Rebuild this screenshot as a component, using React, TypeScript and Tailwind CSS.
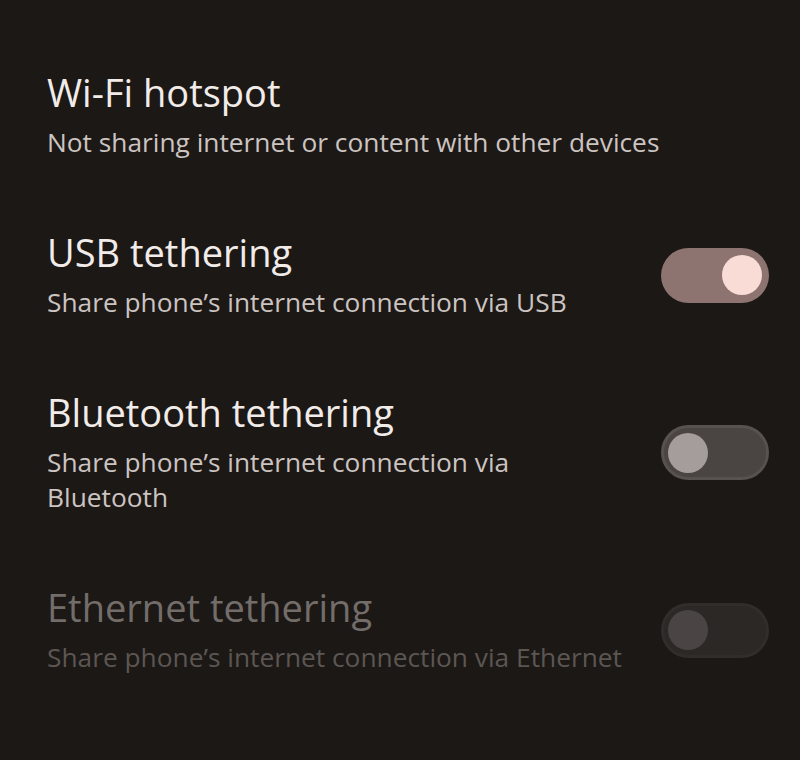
import type { ReactNode } from "react";

// Tethering settings list: title + summary on the left, a Material 3 switch on the right.

type SwitchState = "on" | "off" | "disabled";

type Row = {
  title: string;
  summary: string;
  toggle?: SwitchState;
  disabled?: boolean;
};

const rows: Row[] = [
  { title: "Wi-Fi hotspot", summary: "Not sharing internet or content with other devices" },
  { title: "USB tethering", summary: "Share phone’s internet connection via USB", toggle: "on" },
  {
    title: "Bluetooth tethering",
    summary: "Share phone’s internet connection via Bluetooth",
    toggle: "off",
  },
  {
    title: "Ethernet tethering",
    summary: "Share phone’s internet connection via Ethernet",
    toggle: "disabled",
    disabled: true,
  },
];

function Switch({ state }: { state: SwitchState }): ReactNode {
  if (state === "on") {
    return (
      <div className="flex h-[55px] w-[108px] shrink-0 items-center justify-end rounded-full bg-[#8e7471] pr-[7px]">
        <div className="h-[40px] w-[40px] rounded-full bg-[#fadcd7]" />
      </div>
    );
  }
  const off = state === "off";
  return (
    <div
      className={[
        "flex h-[55px] w-[108px] shrink-0 items-center rounded-full border-[3px] pl-[4px]",
        off ? "border-[#57514f] bg-[#4a4442]" : "border-[#322d2b] bg-[#2c2826]",
      ].join(" ")}
    >
      <div
        className={[
          "h-[40px] w-[40px] rounded-full",
          off ? "bg-[#a59d9b]" : "bg-[#4a4544]",
        ].join(" ")}
      />
    </div>
  );
}

export default function App(): ReactNode {
  return (
    <div
      className="min-h-[760px] w-[800px] bg-[#1c1816] pt-[35px]"
      style={{ fontFamily: "'Open Sans', 'Noto Sans', sans-serif" }}
    >
      {rows.map((row) => (
        <div key={row.title} className="flex items-center justify-between gap-6 py-[35px] pl-[47px] pr-[31px]">
          <div className="min-w-0 flex-1">
            <div
              className={[
                "text-[38px] leading-[44px]",
                row.disabled ? "text-[#736d6a]" : "text-[#f1ece9]",
              ].join(" ")}
            >
              {row.title}
            </div>
            <div
              className={[
                "mt-[11px] text-[26.3px] leading-[35px]",
                row.toggle ? "max-w-[582px]" : "",
                row.disabled ? "text-[#5c5653]" : "text-[#ccc4c0]",
              ].join(" ")}
            >
              {row.summary}
            </div>
          </div>
          {row.toggle ? <Switch state={row.toggle} /> : null}
        </div>
      ))}
    </div>
  );
}
